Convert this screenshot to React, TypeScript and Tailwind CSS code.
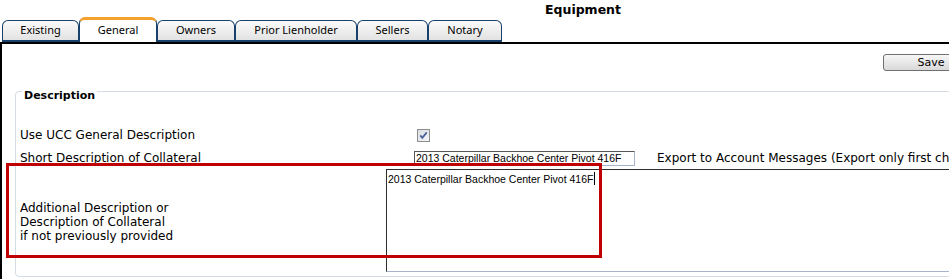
import React from 'react';

const tabs = [
  { label: 'Existing', cls: 'w-[77px]' },
  { label: 'General', cls: 'w-[78px]', active: true },
  { label: 'Owners', cls: 'w-[78px]' },
  { label: 'Prior Lienholder', cls: 'w-[122px]' },
  { label: 'Sellers', cls: 'w-[71px]' },
  { label: 'Notary', cls: 'w-[74px]' },
];

const DESC = '2013 Caterpillar Backhoe Center Pivot 416F';

function Tab({ label, cls, active }: { label: string; cls: string; active?: boolean }) {
  if (active) {
    return (
      <div
        className={`${cls} h-[25px] flex items-center justify-center bg-white rounded-t-[6px] border-t-[3px] border-x border-t-[#f3a02c] border-x-[#17406b] text-[11px] text-black pb-[1px]`}
      >
        {label}
      </div>
    );
  }
  return (
    <div
      className={`${cls} h-[22px] flex items-center justify-center rounded-t-[6px] border border-b-2 border-[#17406b] bg-gradient-to-b from-[#fbfbfb] to-[#e2e2e2] text-[11px] text-black`}
    >
      {label}
    </div>
  );
}

function Checkbox() {
  return (
    <svg width="13" height="13" viewBox="0 0 13 13" className="block">
      <defs>
        <linearGradient id="cb" x1="0" y1="0" x2="1" y2="1">
          <stop offset="0" stopColor="#d9dde3" />
          <stop offset="1" stopColor="#f4f5f7" />
        </linearGradient>
      </defs>
      <rect x="0.5" y="0.5" width="12" height="12" fill="url(#cb)" stroke="#8e8f8f" />
      <path d="M3.3 6.4 L5.3 8.9 L9.8 3.4" fill="none" stroke="#4a5f99" strokeWidth="1.7" />
    </svg>
  );
}

export default function App() {
  return (
    <div className="relative w-[949px] h-[279px] overflow-hidden bg-white text-black font-['DejaVu_Sans',Verdana,sans-serif]">
      {/* header: tabs + title */}
      <div className="flex h-[42px] pl-[2px]">
        <div className="flex items-end self-end font-['Noto_Sans',sans-serif]">
          {tabs.map((t) => (
            <Tab key={t.label} {...t} />
          ))}
        </div>
        <div className="ml-[43px] pt-[2px] text-[12.5px] leading-[15px] font-bold">Equipment</div>
      </div>

      {/* panel */}
      <div className="h-[237px] border-t-2 border-l-2 border-black">
        <div className="flex mt-[10px] ml-[881px]">
          <button className="shrink-0 w-[96px] h-[17px] rounded-[3px] border border-[#707070] bg-gradient-to-b from-[#f7f7f7] to-[#d9d9d9] text-[11px] leading-[15px] text-black">
            Save
          </button>
        </div>

        <fieldset className="mt-[10px] ml-[13px] w-[950px] border border-[#d5dce4] rounded-[4px] pl-[4px] pb-[4px]">
          <legend className="ml-[2px] px-[2px] pt-[8px] text-[11px] leading-[13px] font-bold">Description</legend>

          <div className="mt-[23px] flex items-center h-[20px] text-[12px]">
            <div className="w-[394px]">Use UCC General Description</div>
            <div className="ml-[3px]">
              <Checkbox />
            </div>
          </div>

          <div className="mt-[3px] flex items-center h-[20px] text-[12px]">
            <div className="w-[394px]">Short Description of Collateral</div>
            <div className="w-[221px] h-[15px] border border-t-[#555] border-l-[#555] border-r-[#a7b4cc] border-b-[#a7b4cc] pl-[1px] text-[10.5px] leading-[13px] font-['Liberation_Sans',Arial,sans-serif] whitespace-nowrap overflow-hidden">
              {DESC}
            </div>
            <div className="ml-[22px] whitespace-nowrap">Export to Account Messages (Export only first characters)</div>
          </div>

          <div className="mt-[1px] flex items-center text-[12px]">
            <div className="w-[366px] leading-[14px] pt-[3px]">
              Additional Description or
              <br />
              Description of Collateral
              <br />
              if not previously provided
            </div>
            <div className="w-[580px] h-[103px] border border-t-[#2e2e2e] border-l-[#2e2e2e] border-r-[#a7b4cc] border-b-[#a7b4cc] px-[1px] py-[2px]">
              <div className="flex items-center text-[10.5px] leading-[12px] font-['Liberation_Sans',Arial,sans-serif] whitespace-nowrap">
                <span>{DESC}</span>
                <span className="ml-[1px] w-[1px] h-[13px] bg-black" />
              </div>
            </div>
          </div>
        </fieldset>
      </div>

      {/* annotation overlay */}
      <div className="absolute left-[6px] top-[163px] w-[596px] h-[95px] border-[3px] border-[#c00000] pointer-events-none" />
    </div>
  );
}
